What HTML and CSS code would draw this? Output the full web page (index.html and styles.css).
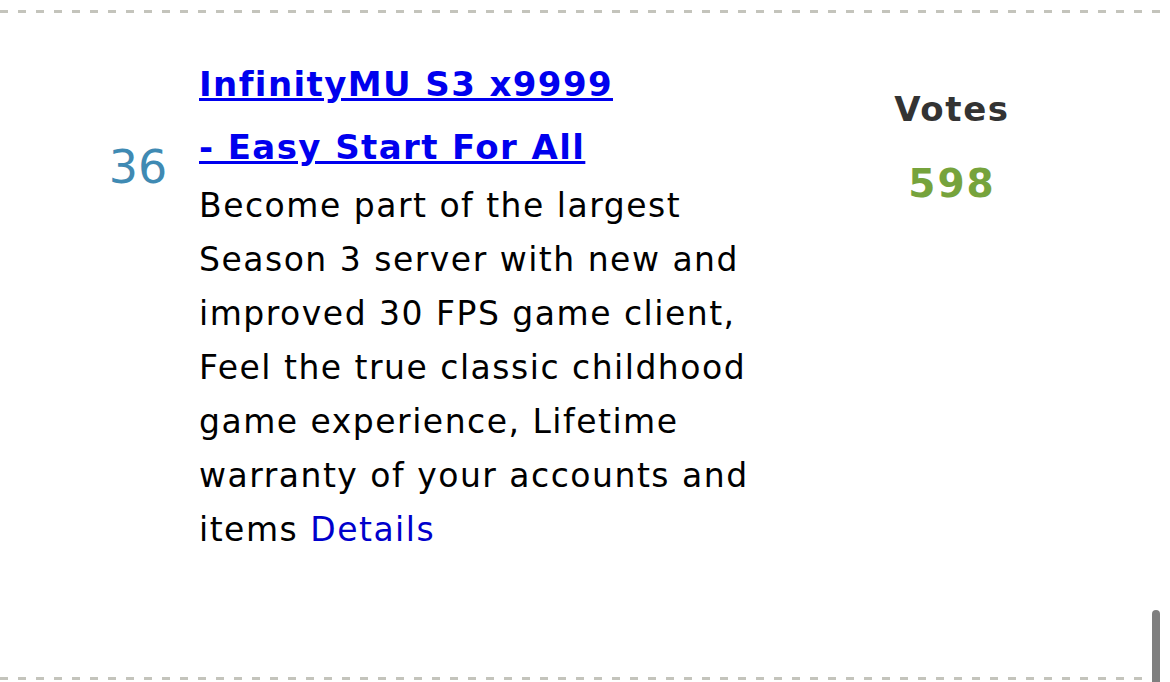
FILE: index.html
```html
<!DOCTYPE html>
<html lang="en">
    <head>
        <meta charset="UTF-8">
        <meta name="viewport" content="width=device-width, initial-scale=1.0">
        <title>Server Ranking</title>
        <link rel="stylesheet" href="styles.css">
    </head>
<body>
    <div class="rank-list">
        <div class="rank-row">
            <div class="rank-num">36</div>
            <div class="rank-info">
                <a href="#" class="server-title">InfinityMU S3 x9999 - Easy Start For All</a>
                <p class="server-desc">Become part of the largest Season 3 server with new and improved 30 FPS game client, Feel the true classic childhood game experience, Lifetime warranty of your accounts and items <a href="#" class="details-link">Details</a></p>
            </div>
            <div class="rank-votes">
                <div class="votes-label">Votes</div>
                <div class="votes-count">598</div>
            </div>
        </div>
    </div>
    <div class="scroll-thumb"></div>
</body>
</html>
```

FILE: styles.css
```css
body {
    margin: 0;
    font-family: 'DejaVu Sans', Verdana, sans-serif;
    background-color: #fff;
    overflow: hidden;
}
.rank-list {
    margin-top: 10px;
}
/* dashed separators drawn as gradients so the dash length matches */
.rank-row {
    box-sizing: border-box;
    display: grid;
    grid-template-columns: 116px 565px 370px;
    column-gap: 3px;
    padding: 43px 0 0 80px;
    height: 670px;
    background-image:
        repeating-linear-gradient(90deg, #c4c4bc 0 8px, transparent 8px 18px),
        repeating-linear-gradient(90deg, #c4c4bc 0 8px, transparent 8px 18px);
    background-size: 100% 3px;
    background-position: left top, left bottom;
    background-repeat: no-repeat;
}
.rank-num {
    text-align: center;
    font-size: 46px;
    color: #3f8ab3;
    padding-top: 87px;
    line-height: 54px;
}
.server-title {
    display: block;
    max-width: 430px;
    font-size: 34px;
    font-weight: bold;
    letter-spacing: 1.4px;
    line-height: 63px;
    color: #0000ee;
    text-decoration: underline;
}
.server-desc {
    margin: 0;
    font-size: 33px;
    letter-spacing: 1.5px;
    line-height: 54px;
    color: #000;
}
.details-link {
    color: #0000cc;
    text-decoration: none;
}
.rank-votes {
    text-align: center;
    font-weight: bold;
    padding-top: 21px;
}
.votes-label {
    font-size: 34px;
    letter-spacing: 1.6px;
    color: #333;
    line-height: 70px;
}
.votes-count {
    font-size: 39px;
    letter-spacing: 2px;
    color: #76a33c;
    line-height: 80px;
}
.scroll-thumb {
    position: fixed;
    right: 10px;
    top: 610px;
    width: 8px;
    height: 90px;
    border-radius: 4px;
    background-color: #7f7f7f;
}
```
